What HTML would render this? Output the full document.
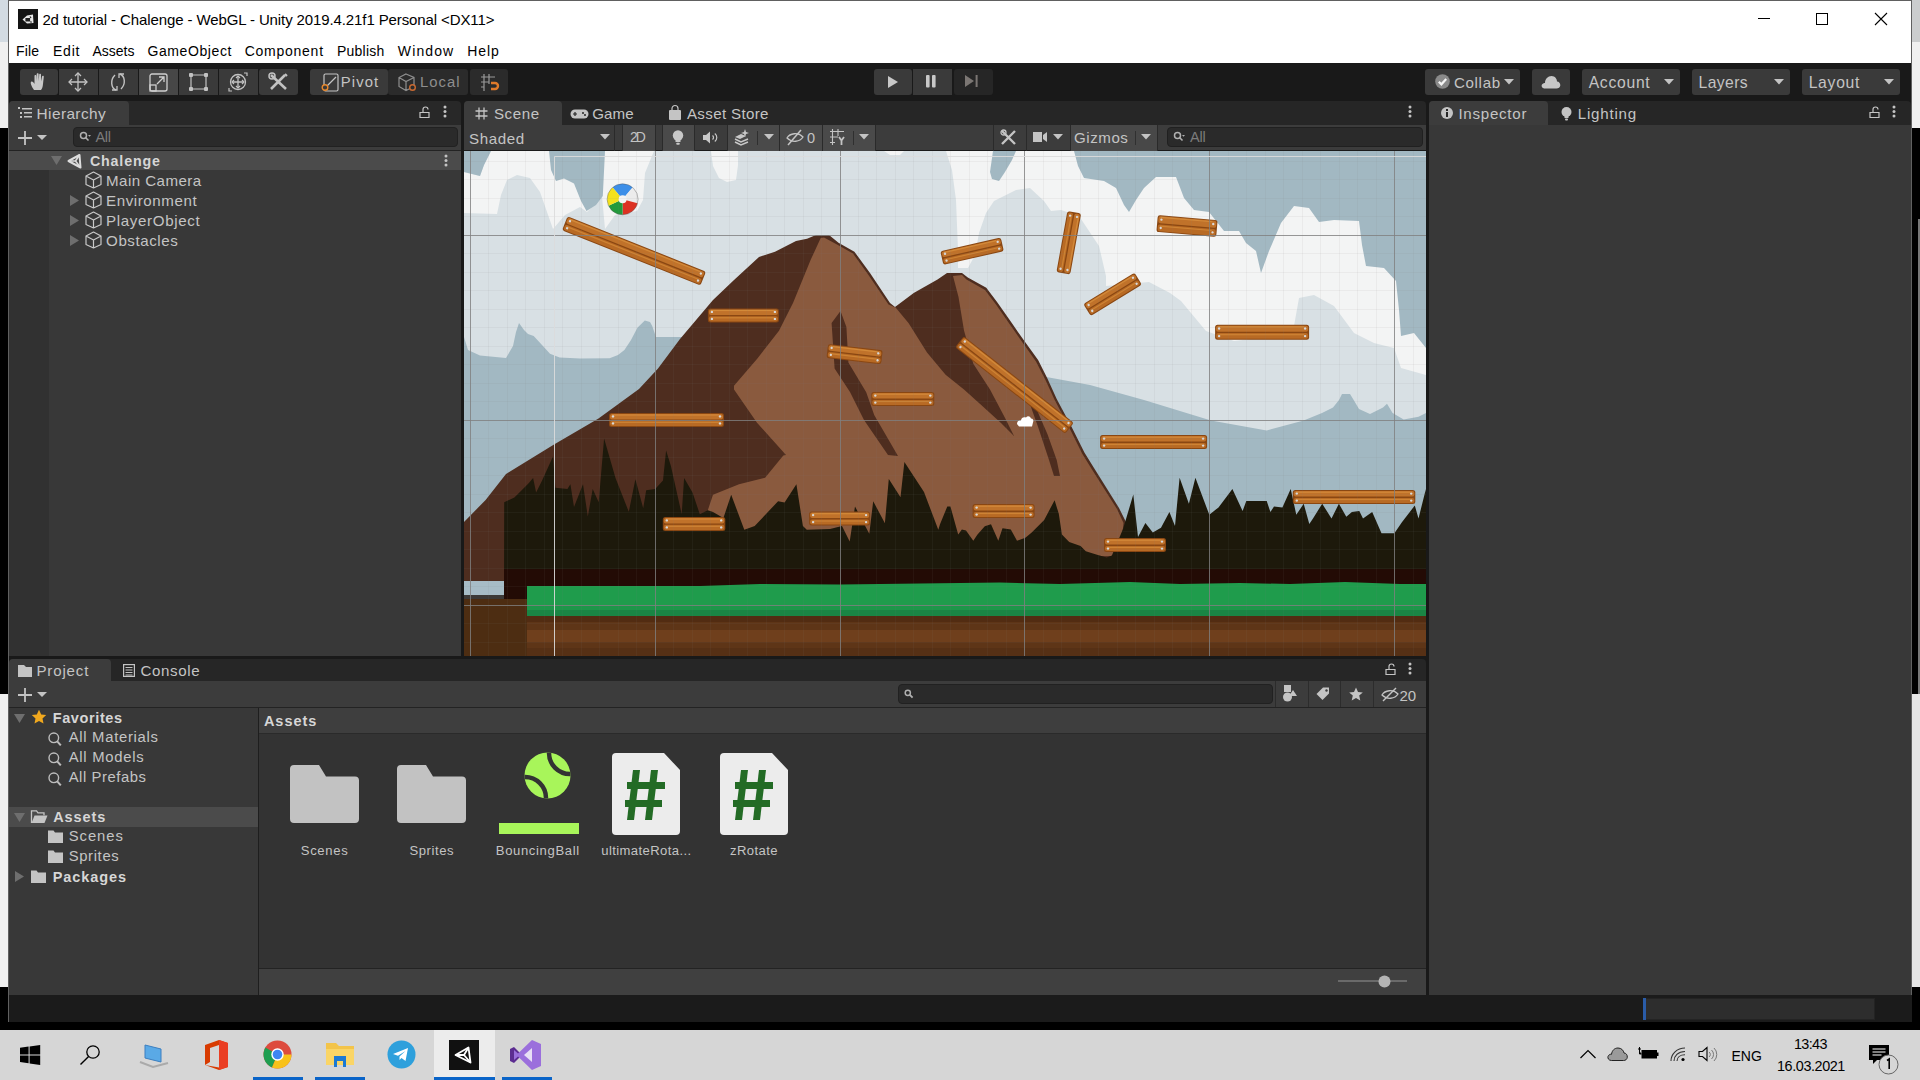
<!DOCTYPE html>
<html><head><meta charset="utf-8">
<style>
*{margin:0;padding:0;box-sizing:border-box}
html,body{width:1920px;height:1080px;overflow:hidden;background:#000;font-family:"Liberation Sans",sans-serif}
.a{position:absolute}
.t{position:absolute;white-space:pre;line-height:1}
.btn{position:absolute;background:#3a3a3a;border-radius:3px}
svg{position:absolute;overflow:visible}
</style></head><body>
<div class="a" style="left:0px;top:0px;width:1920px;height:42px;background:#d3dbe2;"></div>
<div class="a" style="left:1911px;top:0px;width:9px;height:128px;background:#cbcdce;"></div>
<div class="a" style="left:0px;top:42px;width:1920px;height:86px;background:#f0f0f0;"></div>
<div class="a" style="left:0px;top:694px;width:9px;height:293px;background:#f0f0f0;"></div>
<div class="a" style="left:1911px;top:694px;width:9px;height:293px;background:#e6e6e6;"></div>
<div class="a" style="left:1918px;top:219px;width:2px;height:475px;background:#777;"></div>
<div class="a" style="left:0px;top:1030px;width:1920px;height:50px;background:#d6d6d6;"></div>
<div class="a" style="left:8px;top:0px;width:1904px;height:1022px;background:#191919;border:1px solid #606060;border-bottom:none"></div>
<div class="a" style="left:9px;top:1px;width:1902px;height:62px;background:#fff;"></div>
<div class="a" style="left:18px;top:9px;width:20px;height:20px;background:#141414;"></div>
<svg style="left:18px;top:9px" width="20" height="20" viewBox="0 0 20 20"><path d="M4.5 10.5L9 6.5L15 5.5L15.5 14L9 14.5Z" fill="#e8e8e8"/><path d="M8 9.5h3.5v2.5H8z M12 7.5l1 1.5 M12.5 12.5l1 1" stroke="#222" stroke-width="1.2" fill="#222"/></svg>
<div class="t" style="left:42.40px;top:12.30px;font-size:15.00px;letter-spacing:-0.109px;color:#000;">2d tutorial - Chalenge - WebGL - Unity 2019.4.21f1 Personal &lt;DX11&gt;</div>
<div class="a" style="left:1758px;top:18px;width:12px;height:1px;background:#000;"></div>
<div class="a" style="left:1816px;top:13px;width:12px;height:12px;background:transparent;border:1px solid #000"></div>
<svg style="left:1875px;top:13px" width="12" height="12"><path d="M0 0L12 12M12 0L0 12" stroke="#000" stroke-width="1.1"/></svg>
<div class="t" style="left:15.94px;top:43.65px;font-size:14.00px;letter-spacing:0.140px;color:#000;">File</div>
<div class="t" style="left:52.94px;top:43.65px;font-size:14.00px;letter-spacing:0.785px;color:#000;">Edit</div>
<div class="t" style="left:92.44px;top:43.65px;font-size:14.00px;letter-spacing:-0.007px;color:#000;">Assets</div>
<div class="t" style="left:147.44px;top:43.65px;font-size:14.00px;letter-spacing:0.599px;color:#000;">GameObject</div>
<div class="t" style="left:244.74px;top:43.65px;font-size:14.00px;letter-spacing:0.738px;color:#000;">Component</div>
<div class="t" style="left:337.04px;top:43.65px;font-size:14.00px;letter-spacing:0.227px;color:#000;">Publish</div>
<div class="t" style="left:397.84px;top:43.65px;font-size:14.00px;letter-spacing:1.117px;color:#000;">Window</div>
<div class="t" style="left:467.14px;top:43.65px;font-size:14.00px;letter-spacing:0.929px;color:#000;">Help</div>
<div class="a" style="left:9px;top:63px;width:1902px;height:38px;background:#191919;"></div>
<div class="a" style="left:20px;top:69px;width:38px;height:26px;background:#3a3a3a;border-radius:3px"></div>
<div class="a" style="left:59px;top:69px;width:39px;height:26px;background:#3a3a3a;border-radius:0"></div>
<div class="a" style="left:99px;top:69px;width:39px;height:26px;background:#3a3a3a;border-radius:0"></div>
<div class="a" style="left:139px;top:69px;width:39px;height:26px;background:#474747;border-radius:0"></div>
<div class="a" style="left:179px;top:69px;width:39px;height:26px;background:#3a3a3a;border-radius:0"></div>
<div class="a" style="left:219px;top:69px;width:39px;height:26px;background:#3a3a3a;border-radius:0"></div>
<div class="a" style="left:259px;top:69px;width:39px;height:26px;background:#3a3a3a;border-radius:3px"></div>
<div class="a" style="left:310px;top:69px;width:78px;height:26px;background:#3a3a3a;border-radius:3px"></div>
<div class="a" style="left:388px;top:69px;width:80px;height:26px;background:#2b2b2b;border-radius:3px"></div>
<div class="a" style="left:470px;top:69px;width:38px;height:26px;background:#2b2b2b;border-radius:3px"></div>
<div class="a" style="left:874px;top:69px;width:38px;height:26px;background:#3a3a3a;border-radius:3px"></div>
<div class="a" style="left:913px;top:69px;width:39px;height:26px;background:#3a3a3a;border-radius:0"></div>
<div class="a" style="left:954px;top:69px;width:39px;height:26px;background:#262626;border-radius:3px"></div>
<div class="a" style="left:1425px;top:69px;width:95px;height:26px;background:#3a3a3a;border-radius:3px"></div>
<div class="a" style="left:1532px;top:69px;width:38px;height:26px;background:#3a3a3a;border-radius:3px"></div>
<div class="a" style="left:1582px;top:69px;width:98px;height:26px;background:#3a3a3a;border-radius:3px"></div>
<div class="a" style="left:1692px;top:69px;width:98px;height:26px;background:#3a3a3a;border-radius:3px"></div>
<div class="a" style="left:1802px;top:69px;width:98px;height:26px;background:#3a3a3a;border-radius:3px"></div>
<svg style="left:28px;top:71px" width="22" height="22" viewBox="0 0 22 22"><path d="M6 19 C4 16 2 12 3 11 C4 10 5.5 11 6.5 13 L6.5 5 C6.5 3.6 8.3 3.6 8.3 5 L8.5 10 L8.7 3.2 C8.7 1.8 10.6 1.8 10.6 3.2 L10.7 10 L11.2 3.8 C11.2 2.4 13 2.4 13 3.8 L13 10.5 L14 5.5 C14.2 4.2 16 4.4 15.8 5.8 L15 13 C14.8 16 14 18 13 19 Z" fill="#c8c8c8"/></svg>
<svg style="left:68px;top:72px" width="20" height="20" viewBox="0 0 20 20"><path d="M10 1v18M1 10h18" stroke="#c2c2c2" stroke-width="1.3"/><path d="M7 4l3-3 3 3M7 16l3 3 3-3M4 7l-3 3 3 3M16 7l3 3-3 3" fill="none" stroke="#c2c2c2" stroke-width="1.3"/></svg>
<svg style="left:108px;top:72px" width="20" height="20" viewBox="0 0 20 20"><path d="M8 18 C3 16 2 8 7 3 M12 2 C17 4 18 12 13 17" fill="none" stroke="#c2c2c2" stroke-width="1.4"/><path d="M4 18h5v-4 M16 2h-5v4" fill="none" stroke="#c2c2c2" stroke-width="1.3"/></svg>
<svg style="left:149px;top:73px" width="19" height="19" viewBox="0 0 19 19"><rect x="1" y="1" width="17" height="17" rx="2" fill="none" stroke="#d0d0d0" stroke-width="1.3"/><rect x="1" y="12" width="6" height="6" fill="none" stroke="#d0d0d0" stroke-width="1.3"/><path d="M8 11L15 4M10 4h5v5" fill="none" stroke="#d0d0d0" stroke-width="1.3"/></svg>
<svg style="left:189px;top:73px" width="19" height="18" viewBox="0 0 19 18"><path d="M2 3v12M17 3v12M3 2h13M3 16h13" stroke="#c2c2c2" stroke-width="1.2"/><g fill="#c2c2c2"><rect x="0" y="0" width="4" height="4" rx="1"/><rect x="15" y="0" width="4" height="4" rx="1"/><rect x="0" y="14" width="4" height="4" rx="1"/><rect x="15" y="14" width="4" height="4" rx="1"/></g></svg>
<svg style="left:228px;top:72px" width="20" height="20" viewBox="0 0 20 20"><circle cx="10" cy="10" r="7.5" fill="none" stroke="#c2c2c2" stroke-width="1.3"/><path d="M10 4v12M4 10h12" stroke="#c2c2c2" stroke-width="1.3"/><path d="M8 6l2-2 2 2M8 14l2 2 2-2M6 8l-2 2 2 2M14 8l2 2-2 2" fill="none" stroke="#c2c2c2" stroke-width="1.2"/><path d="M16 1h3v3M1 16v3h3" fill="none" stroke="#c2c2c2" stroke-width="1.2"/></svg>
<svg style="left:268px;top:72px" width="20" height="20" viewBox="0 0 20 20"><path d="M3 3l15 14M17 3L3 17" stroke="#c2c2c2" stroke-width="2.6"/><circle cx="4" cy="4" r="3" fill="none" stroke="#c2c2c2" stroke-width="1.5"/><path d="M17 2l2 2" stroke="#c2c2c2" stroke-width="2"/></svg>
<svg style="left:321px;top:73px" width="18" height="19" viewBox="0 0 18 19"><rect x="3" y="1" width="14" height="17" rx="1.5" fill="none" stroke="#c4c4c4" stroke-width="1.2"/><path d="M5 14L15 4" stroke="#c4c4c4" stroke-width="1.2"/><circle cx="4" cy="14.5" r="2.8" fill="#383838" stroke="#e8892e" stroke-width="1.4"/></svg>
<div class="t" style="left:340.71px;top:74.95px;font-size:14.83px;letter-spacing:1.144px;color:#c4c4c4;">Pivot</div>
<svg style="left:398px;top:73px" width="19" height="19" viewBox="0 0 19 19"><path d="M8 1L16 4.5v9L8 17.5L1 13.5v-9z M1 4.5l7 4 8-4 M8 8.5v9" fill="none" stroke="#8e8e8e" stroke-width="1.2"/><circle cx="14.5" cy="14.5" r="2.8" fill="#2b2b2b" stroke="#c96a32" stroke-width="1.4"/></svg>
<div class="t" style="left:420.01px;top:74.95px;font-size:14.83px;letter-spacing:0.999px;color:#8e8e8e;">Local</div>
<svg style="left:480px;top:73px" width="20" height="19" viewBox="0 0 20 19"><path d="M4 1v17M9 1v10M1 4h14M1 9h8M1 14h3" stroke="#9a9a9a" stroke-width="1.2"/><path d="M11 10h4a3 3 0 0 1 0 6h-4" fill="none" stroke="#e07a2a" stroke-width="2.4"/></svg>
<svg style="left:887px;top:75px" width="12" height="14"><path d="M1 1v12l10-6z" fill="#c8c8c8"/></svg>
<svg style="left:925px;top:75px" width="12" height="14"><rect x="1" y="0" width="3.6" height="12.6" rx="1" fill="#c8c8c8"/><rect x="7" y="0" width="3.6" height="12.6" rx="1" fill="#c8c8c8"/></svg>
<svg style="left:965px;top:75px" width="14" height="14"><path d="M0 0v12l9-6z M10.6 0h2v12h-2z" fill="#7b7673"/></svg>
<svg style="left:1435px;top:74px" width="15" height="15"><circle cx="7.5" cy="7.5" r="7.3" fill="#8a8a8a"/><path d="M3.8 7.7l2.6 2.6 4.8-5.2" fill="none" stroke="#f4f4f4" stroke-width="2.2"/></svg>
<div class="t" style="left:1453.90px;top:75.00px;font-size:15.12px;letter-spacing:0.681px;color:#c4c4c4;">Collab</div>
<svg style="left:1504px;top:79px" width="10" height="6"><path d="M0 0h10l-5 5.6z" fill="#c4c4c4"/></svg>
<svg style="left:1541px;top:75px" width="20" height="14" viewBox="0 0 20 14"><path d="M4 13.5C1 13.5 0 11 1 9.5C2 8 3.5 8 4 8C4 4 7 1 10.5 1C14 1 16 4 16 6.5C18 6.5 19.5 8.5 19.3 10.5C19 12.5 17.5 13.5 15.5 13.5Z" fill="#c8c8c8"/></svg>
<div class="t" style="left:1588.67px;top:74.71px;font-size:15.70px;letter-spacing:0.730px;color:#c4c4c4;">Account</div>
<svg style="left:1664px;top:79px" width="10" height="6"><path d="M0 0h10l-5 5.6z" fill="#c4c4c4"/></svg>
<div class="t" style="left:1698.57px;top:74.71px;font-size:15.70px;letter-spacing:0.396px;color:#c4c4c4;">Layers</div>
<svg style="left:1774px;top:79px" width="10" height="6"><path d="M0 0h10l-5 5.6z" fill="#c4c4c4"/></svg>
<div class="t" style="left:1808.67px;top:74.71px;font-size:15.70px;letter-spacing:0.733px;color:#c4c4c4;">Layout</div>
<svg style="left:1884px;top:79px" width="10" height="6"><path d="M0 0h10l-5 5.6z" fill="#c4c4c4"/></svg>
<div class="a" style="left:9px;top:101px;width:452px;height:24px;background:#282828;border-radius:4px 4px 0 0"></div>
<div class="a" style="left:9px;top:101px;width:120px;height:24px;background:#3c3c3c;border-radius:4px 4px 0 0"></div>
<div class="a" style="left:9px;top:125px;width:452px;height:25px;background:#3c3c3c;"></div>
<div class="a" style="left:9px;top:150px;width:452px;height:506px;background:#383838;"></div>
<div class="a" style="left:9px;top:150px;width:452px;height:1px;background:#232323;"></div>
<div class="a" style="left:73px;top:127px;width:385px;height:20px;background:#2a2a2a;border:1px solid #212121;border-radius:4px"></div>
<div class="a" style="left:9px;top:151px;width:452px;height:19px;background:#4b4b4b;"></div>
<div class="a" style="left:9px;top:170px;width:40px;height:486px;background:#313131;"></div>
<div class="a" style="left:464px;top:101px;width:962px;height:24px;background:#262626;border-radius:4px 4px 0 0"></div>
<div class="a" style="left:464px;top:101px;width:98px;height:24px;background:#3c3c3c;border-radius:4px 4px 0 0"></div>
<div class="a" style="left:464px;top:125px;width:962px;height:26px;background:#3c3c3c;"></div>
<div class="a" style="left:464px;top:150px;width:962px;height:1px;background:#1a1a1a;"></div>
<div class="a" style="left:1429px;top:101px;width:482px;height:24px;background:#262626;border-radius:4px 4px 0 0"></div>
<div class="a" style="left:1429px;top:101px;width:119px;height:24px;background:#3c3c3c;border-radius:4px 4px 0 0"></div>
<div class="a" style="left:1429px;top:125px;width:482px;height:870px;background:#383838;"></div>
<div class="a" style="left:9px;top:659px;width:1417px;height:22px;background:#262626;border-radius:4px 4px 0 0"></div>
<div class="a" style="left:9px;top:659px;width:102px;height:22px;background:#3c3c3c;border-radius:4px 4px 0 0"></div>
<div class="a" style="left:9px;top:681px;width:1417px;height:26px;background:#3c3c3c;"></div>
<div class="a" style="left:9px;top:707px;width:1417px;height:1px;background:#232323;"></div>
<div class="a" style="left:9px;top:708px;width:249px;height:287px;background:#383838;"></div>
<div class="a" style="left:258px;top:708px;width:1px;height:287px;background:#1e1e1e;"></div>
<div class="a" style="left:259px;top:708px;width:1167px;height:25px;background:#3e3e3e;"></div>
<div class="a" style="left:259px;top:733px;width:1167px;height:1px;background:#2a2a2a;"></div>
<div class="a" style="left:259px;top:734px;width:1167px;height:234px;background:#333333;"></div>
<div class="a" style="left:259px;top:968px;width:1167px;height:1px;background:#232323;"></div>
<div class="a" style="left:259px;top:969px;width:1167px;height:26px;background:#404040;"></div>
<div class="a" style="left:898px;top:684px;width:375px;height:20px;background:#2a2a2a;border:1px solid #212121;border-radius:4px"></div>
<div class="a" style="left:9px;top:995px;width:1903px;height:27px;background:#1b1b1b;"></div>
<div class="a" style="left:1643px;top:998px;width:232px;height:22px;background:#2d2d2d;border:1px solid #232323"></div>
<div class="a" style="left:1643px;top:998px;width:3px;height:22px;background:#2a5ca8;"></div>
<svg style="left:18px;top:107px" width="14" height="12" viewBox="0 0 14 12"><g fill="#c4c4c4"><rect x="0" y="0" width="2" height="2"/><rect x="4" y="1" width="10" height="1.5"/><rect x="2" y="5" width="2" height="2"/><rect x="6" y="5" width="8" height="1.5"/><rect x="2" y="9" width="2" height="2"/><rect x="6" y="9" width="8" height="1.5"/></g></svg>
<div class="t" style="left:36.58px;top:105.96px;font-size:15.41px;letter-spacing:0.394px;color:#c4c4c4;">Hierarchy</div>
<svg style="left:419px;top:106px" width="11" height="12" viewBox="0 0 11 12"><path d="M1 6.5h9v5H1z M4 6.5V3.5a2.5 2.5 0 0 1 5 0" fill="none" stroke="#c4c4c4" stroke-width="1.2"/></svg>
<svg style="left:443px;top:105px" width="4" height="14"><circle cx="2" cy="2" r="1.5" fill="#c4c4c4"/><circle cx="2" cy="6.5" r="1.5" fill="#c4c4c4"/><circle cx="2" cy="11" r="1.5" fill="#c4c4c4"/></svg>
<svg style="left:17px;top:130px" width="32" height="16"><path d="M8 1v14M1 8h14" stroke="#c4c4c4" stroke-width="1.8"/><path d="M20 5h10l-5 5z" fill="#c4c4c4"/></svg>
<svg style="left:79px;top:131px" width="14" height="12"><circle cx="4.5" cy="4.5" r="3" fill="none" stroke="#b0b0b0" stroke-width="1.5"/><path d="M6.5 6.5l3 3" stroke="#b0b0b0" stroke-width="1.6"/><path d="M9 4h3l-1.5 1.8z" fill="#b0b0b0"/></svg>
<div class="t" style="left:95.42px;top:129.70px;font-size:14.53px;letter-spacing:-0.318px;color:#7c7c7c;">All</div>
<svg style="left:51px;top:156px" width="11" height="9"><path d="M0 0h11l-5.5 9z" fill="#6e6e6e"/></svg>
<svg style="left:67px;top:153px" width="16" height="16" viewBox="0 0 16 16"><path d="M1.5 8L12.5 2L13.5 14.5Z" fill="none" stroke="#ddd" stroke-width="2" stroke-linejoin="round"/><path d="M1.5 8h7M8.5 8l4-6M8.5 8l5 6.5" stroke="#ddd" stroke-width="1.6"/></svg>
<div class="t" style="left:89.93px;top:153.94px;font-size:14.24px;letter-spacing:0.840px;color:#d6d6d6;font-weight:bold;">Chalenge</div>
<svg style="left:444px;top:154px" width="4" height="14"><circle cx="2" cy="2" r="1.5" fill="#c4c4c4"/><circle cx="2" cy="6.5" r="1.5" fill="#c4c4c4"/><circle cx="2" cy="11" r="1.5" fill="#c4c4c4"/></svg>
<svg style="left:85px;top:171px" width="17" height="18" viewBox="0 0 17 18"><path d="M8.5 1L16 5v8.5L8.5 17L1 13.5V5z M1 5l7.5 4L16 5 M8.5 9v8" fill="none" stroke="#c8c8c8" stroke-width="1.2" stroke-linejoin="round"/></svg>
<div class="t" style="left:106.10px;top:173.20px;font-size:15.12px;letter-spacing:0.433px;color:#c4c4c4;">Main Camera</div>
<svg style="left:85px;top:191px" width="17" height="18" viewBox="0 0 17 18"><path d="M8.5 1L16 5v8.5L8.5 17L1 13.5V5z M1 5l7.5 4L16 5 M8.5 9v8" fill="none" stroke="#c8c8c8" stroke-width="1.2" stroke-linejoin="round"/></svg>
<svg style="left:70px;top:195px" width="9" height="11"><path d="M0 0v11l9-5.5z" fill="#6e6e6e"/></svg>
<div class="t" style="left:106.10px;top:193.20px;font-size:15.12px;letter-spacing:0.570px;color:#c4c4c4;">Environment</div>
<svg style="left:85px;top:211px" width="17" height="18" viewBox="0 0 17 18"><path d="M8.5 1L16 5v8.5L8.5 17L1 13.5V5z M1 5l7.5 4L16 5 M8.5 9v8" fill="none" stroke="#c8c8c8" stroke-width="1.2" stroke-linejoin="round"/></svg>
<svg style="left:70px;top:215px" width="9" height="11"><path d="M0 0v11l9-5.5z" fill="#6e6e6e"/></svg>
<div class="t" style="left:106.10px;top:213.20px;font-size:15.12px;letter-spacing:0.638px;color:#c4c4c4;">PlayerObject</div>
<svg style="left:85px;top:231px" width="17" height="18" viewBox="0 0 17 18"><path d="M8.5 1L16 5v8.5L8.5 17L1 13.5V5z M1 5l7.5 4L16 5 M8.5 9v8" fill="none" stroke="#c8c8c8" stroke-width="1.2" stroke-linejoin="round"/></svg>
<svg style="left:70px;top:235px" width="9" height="11"><path d="M0 0v11l9-5.5z" fill="#6e6e6e"/></svg>
<div class="t" style="left:106.10px;top:233.20px;font-size:15.12px;letter-spacing:0.556px;color:#c4c4c4;">Obstacles</div>
<svg style="left:475px;top:107px" width="13" height="13" viewBox="0 0 13 13"><path d="M4 0.5v12M9 0.5v12M0.5 4h12M0.5 9h12" stroke="#c4c4c4" stroke-width="1.3"/></svg>
<div class="t" style="left:493.90px;top:106.40px;font-size:15.12px;letter-spacing:0.624px;color:#c4c4c4;">Scene</div>
<svg style="left:570px;top:109px" width="19" height="10" viewBox="0 0 19 10"><rect x="0.5" y="0.5" width="18" height="9" rx="4.5" fill="#c4c4c4"/><path d="M3 5h4M5 3v4" stroke="#262626" stroke-width="1.2"/><circle cx="13" cy="4" r="1" fill="#262626"/><circle cx="15" cy="6" r="1" fill="#262626"/></svg>
<div class="t" style="left:592.20px;top:106.40px;font-size:15.12px;letter-spacing:0.097px;color:#c4c4c4;">Game</div>
<svg style="left:669px;top:106px" width="12" height="14" viewBox="0 0 12 14"><path d="M3 4V2.5a3 3 0 0 1 6 0V4" fill="none" stroke="#c4c4c4" stroke-width="1.2"/><rect x="0" y="4" width="12" height="10" rx="1" fill="#c4c4c4"/></svg>
<div class="t" style="left:686.90px;top:106.40px;font-size:15.12px;letter-spacing:0.352px;color:#c4c4c4;">Asset Store</div>
<svg style="left:1408px;top:105px" width="4" height="14"><circle cx="2" cy="2" r="1.5" fill="#c4c4c4"/><circle cx="2" cy="6.5" r="1.5" fill="#c4c4c4"/><circle cx="2" cy="11" r="1.5" fill="#c4c4c4"/></svg>
<div class="a" style="left:614px;top:125px;width:1px;height:26px;background:#2a2a2a;"></div>
<div class="a" style="left:622px;top:125px;width:1px;height:26px;background:#2a2a2a;"></div>
<div class="a" style="left:623px;top:125px;width:32px;height:26px;background:#484848;"></div>
<div class="a" style="left:655px;top:125px;width:1px;height:26px;background:#2a2a2a;"></div>
<div class="a" style="left:662px;top:125px;width:1px;height:26px;background:#2a2a2a;"></div>
<div class="a" style="left:663px;top:125px;width:31px;height:26px;background:#4a4a4a;"></div>
<div class="a" style="left:694px;top:125px;width:1px;height:26px;background:#2a2a2a;"></div>
<div class="a" style="left:727px;top:125px;width:1px;height:26px;background:#2a2a2a;"></div>
<div class="a" style="left:728px;top:125px;width:51px;height:26px;background:#4a4a4a;"></div>
<div class="a" style="left:779px;top:125px;width:1px;height:26px;background:#2a2a2a;"></div>
<div class="a" style="left:780px;top:125px;width:42px;height:26px;background:#4a4a4a;"></div>
<div class="a" style="left:822px;top:125px;width:1px;height:26px;background:#2a2a2a;"></div>
<div class="a" style="left:823px;top:125px;width:52px;height:26px;background:#4a4a4a;"></div>
<div class="a" style="left:875px;top:125px;width:1px;height:26px;background:#2a2a2a;"></div>
<div class="a" style="left:993px;top:125px;width:1px;height:26px;background:#2a2a2a;"></div>
<div class="a" style="left:1026px;top:125px;width:1px;height:26px;background:#2a2a2a;"></div>
<div class="a" style="left:1070px;top:125px;width:1px;height:26px;background:#2a2a2a;"></div>
<div class="a" style="left:1071px;top:125px;width:86px;height:26px;background:#484848;"></div>
<div class="a" style="left:1157px;top:125px;width:1px;height:26px;background:#2a2a2a;"></div>
<div class="a" style="left:1167px;top:127px;width:256px;height:20px;background:#2a2a2a;border:1px solid #202020;border-radius:4px"></div>
<div class="t" style="left:469.10px;top:130.50px;font-size:15.12px;letter-spacing:0.588px;color:#c4c4c4;">Shaded</div>
<svg style="left:600px;top:134px" width="10" height="6"><path d="M0 0h10l-5 5.6z" fill="#c4c4c4"/></svg>
<div class="t" style="left:629.94px;top:130.69px;font-size:13.95px;letter-spacing:-2.062px;color:#c4c4c4;">2D</div>
<svg style="left:672px;top:130px" width="12" height="16" viewBox="0 0 12 16"><circle cx="6" cy="5.5" r="5.2" fill="#c8c8c8"/><rect x="3.5" y="9" width="5" height="3" fill="#c8c8c8"/><rect x="4.2" y="12.8" width="3.6" height="2" rx="1" fill="#c8c8c8"/></svg>
<svg style="left:703px;top:131px" width="15" height="13" viewBox="0 0 15 13"><path d="M0 4h3l4-3.5v12L3 9H0z" fill="#c8c8c8"/><path d="M9.5 4.5a2.5 2.5 0 0 1 0 4 M11.8 2.5a5 5 0 0 1 0 8" fill="none" stroke="#c8c8c8" stroke-width="1.2"/></svg>
<svg style="left:734px;top:129px" width="16" height="16" viewBox="0 0 16 16"><path d="M1 10l6 3 7-3M1 13l6 3 7-3" fill="none" stroke="#c8c8c8" stroke-width="1.5"/><path d="M1 8l6-3 5 2-6 3z" fill="#c8c8c8"/><path d="M11 0l1 3 3 1-3 1-1 3-1-3-3-1 3-1z" fill="#c8c8c8"/></svg>
<div class="a" style="left:757px;top:131px;width:1px;height:14px;background:#2f2f2f;"></div>
<svg style="left:764px;top:134px" width="10" height="6"><path d="M0 0h10l-5 5.6z" fill="#c4c4c4"/></svg>
<svg style="left:786px;top:129px" width="18" height="17" viewBox="0 0 18 17"><path d="M1 9C4 4 12 3 17 8C14 13 6 14 1 9Z" fill="none" stroke="#c4c4c4" stroke-width="1.3"/><path d="M2 16L15 1" stroke="#c4c4c4" stroke-width="1.5"/></svg>
<div class="t" style="left:806.92px;top:130.70px;font-size:14.53px;letter-spacing:0.000px;color:#c4c4c4;">0</div>
<svg style="left:829px;top:128px" width="18" height="18" viewBox="0 0 18 18"><path d="M3.5 1v16M9 1v7M1 3.5h14M1 9h8M1 14.5h5" stroke="#c4c4c4" stroke-width="1.1"/><path d="M10 9l2.5 3.5L15 9M12.5 12.5V17" fill="none" stroke="#c4c4c4" stroke-width="1.8"/></svg>
<div class="a" style="left:853px;top:131px;width:1px;height:14px;background:#2f2f2f;"></div>
<svg style="left:859px;top:134px" width="10" height="6"><path d="M0 0h10l-5 5.6z" fill="#c4c4c4"/></svg>
<svg style="left:1000px;top:129px" width="17" height="17" viewBox="0 0 17 17"><path d="M2 2l13 13M15 2L2 15" stroke="#c4c4c4" stroke-width="2.4"/><circle cx="3.5" cy="3.5" r="2.5" fill="none" stroke="#c4c4c4" stroke-width="1.3"/></svg>
<svg style="left:1033px;top:131px" width="35" height="12" viewBox="0 0 35 12"><rect x="0" y="1" width="9" height="10" fill="#c4c4c4"/><path d="M10 4l4-3v10l-4-3z" fill="#c4c4c4"/><path d="M20 3h10l-5 5.5z" fill="#c4c4c4"/></svg>
<div class="t" style="left:1074.10px;top:130.40px;font-size:15.12px;letter-spacing:0.525px;color:#c4c4c4;">Gizmos</div>
<div class="a" style="left:1135px;top:131px;width:1px;height:14px;background:#303030;"></div>
<svg style="left:1141px;top:134px" width="10" height="6"><path d="M0 0h10l-5 5.6z" fill="#c4c4c4"/></svg>
<svg style="left:1173px;top:131px" width="14" height="12"><circle cx="4.5" cy="4.5" r="3" fill="none" stroke="#b0b0b0" stroke-width="1.5"/><path d="M6.5 6.5l3 3" stroke="#b0b0b0" stroke-width="1.6"/><path d="M9 4h3l-1.5 1.8z" fill="#b0b0b0"/></svg>
<div class="t" style="left:1189.92px;top:130.20px;font-size:14.53px;letter-spacing:-0.118px;color:#7c7c7c;">All</div>
<svg style="left:1441px;top:107px" width="12" height="12"><circle cx="6" cy="6" r="6" fill="#c4c4c4"/><rect x="5" y="5" width="2" height="5" fill="#282828"/><rect x="5" y="2" width="2" height="2" fill="#282828"/></svg>
<div class="t" style="left:1458.40px;top:106.40px;font-size:15.12px;letter-spacing:0.735px;color:#c4c4c4;">Inspector</div>
<svg style="left:1561px;top:107px" width="11" height="14" viewBox="0 0 11 14"><circle cx="5.5" cy="5" r="5" fill="#c4c4c4"/><rect x="3.5" y="9" width="4" height="2" fill="#c4c4c4"/><rect x="4" y="11.5" width="3" height="2" rx="1" fill="#c4c4c4"/></svg>
<div class="t" style="left:1577.70px;top:106.40px;font-size:15.12px;letter-spacing:0.801px;color:#c4c4c4;">Lighting</div>
<svg style="left:1869px;top:106px" width="11" height="12" viewBox="0 0 11 12"><path d="M1 6.5h9v5H1z M4 6.5V3.5a2.5 2.5 0 0 1 5 0" fill="none" stroke="#c4c4c4" stroke-width="1.2"/></svg>
<svg style="left:1892px;top:105px" width="4" height="14"><circle cx="2" cy="2" r="1.5" fill="#c4c4c4"/><circle cx="2" cy="6.5" r="1.5" fill="#c4c4c4"/><circle cx="2" cy="11" r="1.5" fill="#c4c4c4"/></svg>
<svg style="left:18px;top:665px" width="14" height="12" viewBox="0 0 14 12"><path d="M0 0h6l2 2h6v10H0z" fill="#c4c4c4"/></svg>
<div class="t" style="left:36.40px;top:663.20px;font-size:15.12px;letter-spacing:0.835px;color:#c4c4c4;">Project</div>
<svg style="left:123px;top:664px" width="12" height="13" viewBox="0 0 12 13"><rect x="0.6" y="0.6" width="10.8" height="11.8" fill="none" stroke="#c4c4c4" stroke-width="1.2"/><path d="M2.5 3.5h7M2.5 6h7M2.5 8.5h7M2.5 11h7" stroke="#c4c4c4" stroke-width="1.1"/></svg>
<div class="t" style="left:140.40px;top:663.20px;font-size:15.12px;letter-spacing:0.633px;color:#c4c4c4;">Console</div>
<svg style="left:1385px;top:663px" width="11" height="12" viewBox="0 0 11 12"><path d="M1 6.5h9v5H1z M4 6.5V3.5a2.5 2.5 0 0 1 5 0" fill="none" stroke="#c4c4c4" stroke-width="1.2"/></svg>
<svg style="left:1408px;top:662px" width="4" height="14"><circle cx="2" cy="2" r="1.5" fill="#c4c4c4"/><circle cx="2" cy="6.5" r="1.5" fill="#c4c4c4"/><circle cx="2" cy="11" r="1.5" fill="#c4c4c4"/></svg>
<svg style="left:17px;top:687px" width="32" height="16"><path d="M8 1v14M1 8h14" stroke="#c4c4c4" stroke-width="1.8"/><path d="M20 5h10l-5 5z" fill="#c4c4c4"/></svg>
<svg style="left:904px;top:689px" width="10" height="10"><circle cx="3.8" cy="3.8" r="2.6" fill="none" stroke="#b0b0b0" stroke-width="1.5"/><path d="M5.6 5.6l3 3" stroke="#b0b0b0" stroke-width="1.8"/></svg>
<div class="a" style="left:1275px;top:681px;width:1px;height:26px;background:#2c2c2c;"></div>
<div class="a" style="left:1308px;top:681px;width:1px;height:26px;background:#2c2c2c;"></div>
<div class="a" style="left:1340px;top:681px;width:1px;height:26px;background:#2c2c2c;"></div>
<div class="a" style="left:1373px;top:681px;width:1px;height:26px;background:#2c2c2c;"></div>
<svg style="left:1283px;top:685px" width="15" height="17" viewBox="0 0 15 17"><rect x="1" y="0" width="7" height="7" fill="#c4c4c4"/><circle cx="4.5" cy="12" r="4.5" fill="#c4c4c4"/><path d="M10 5l4 6h-8z" fill="#c4c4c4"/></svg>
<svg style="left:1316px;top:687px" width="14" height="14" viewBox="0 0 14 14"><path d="M7 0.5h6v6L6.5 13 0.5 7z" fill="#c4c4c4"/><circle cx="10.5" cy="3.5" r="1.2" fill="#3c3c3c"/></svg>
<svg style="left:1349px;top:687px" width="14" height="14" viewBox="0 0 14 14"><path d="M7 0.5l2 4.5 4.8 0.4-3.6 3.2 1.1 4.8L7 10.9l-4.3 2.5 1.1-4.8L0.2 5.4 5 5z" fill="#c4c4c4"/></svg>
<svg style="left:1381px;top:687px" width="18" height="15" viewBox="0 0 18 15"><path d="M1 8C4 3 12 2 17 7C14 12 6 13 1 8Z" fill="none" stroke="#c4c4c4" stroke-width="1.3"/><path d="M2 14L15 1" stroke="#c4c4c4" stroke-width="1.5"/></svg>
<div class="t" style="left:1399.40px;top:688.30px;font-size:15.00px;letter-spacing:0.000px;color:#c4c4c4;">20</div>
<svg style="left:14px;top:714px" width="11" height="9"><path d="M0 0h11l-5.5 9z" fill="#6e6e6e"/></svg>
<svg style="left:31px;top:709px" width="16" height="16" viewBox="0 0 16 16"><path d="M8 0.8l2.2 4.6 5 0.6-3.7 3.4 1 5L8 11.9l-4.5 2.5 1-5L0.8 6l5-0.6z" fill="#f0a81e"/></svg>
<div class="t" style="left:52.67px;top:710.70px;font-size:14.53px;letter-spacing:0.611px;color:#d6d6d6;font-weight:bold;">Favorites</div>
<svg style="left:48px;top:732px" width="14" height="15" viewBox="0 0 14 15"><circle cx="5.8" cy="5.8" r="4.8" fill="none" stroke="#bdbdbd" stroke-width="1.4"/><path d="M9.2 9.4l3.6 4" stroke="#bdbdbd" stroke-width="2"/></svg>
<div class="t" style="left:68.66px;top:730.45px;font-size:14.83px;letter-spacing:0.717px;color:#c4c4c4;">All Materials</div>
<svg style="left:48px;top:752px" width="14" height="15" viewBox="0 0 14 15"><circle cx="5.8" cy="5.8" r="4.8" fill="none" stroke="#bdbdbd" stroke-width="1.4"/><path d="M9.2 9.4l3.6 4" stroke="#bdbdbd" stroke-width="2"/></svg>
<div class="t" style="left:68.66px;top:750.45px;font-size:14.83px;letter-spacing:0.739px;color:#c4c4c4;">All Models</div>
<svg style="left:48px;top:772px" width="14" height="15" viewBox="0 0 14 15"><circle cx="5.8" cy="5.8" r="4.8" fill="none" stroke="#bdbdbd" stroke-width="1.4"/><path d="M9.2 9.4l3.6 4" stroke="#bdbdbd" stroke-width="2"/></svg>
<div class="t" style="left:68.66px;top:770.45px;font-size:14.83px;letter-spacing:0.565px;color:#c4c4c4;">All Prefabs</div>
<div class="a" style="left:9px;top:807px;width:249px;height:20px;background:#4b4b4b;"></div>
<svg style="left:14px;top:813px" width="11" height="9"><path d="M0 0h11l-5.5 9z" fill="#6e6e6e"/></svg>
<svg style="left:31px;top:810px" width="17" height="14" viewBox="0 0 17 14"><path d="M0.5 13V0.8h5l1.5 2h6v2.5" fill="none" stroke="#c4c4c4" stroke-width="1.3"/><path d="M0.5 13l3-7.5h13l-3 7.5z" fill="#c4c4c4"/></svg>
<div class="t" style="left:53.17px;top:809.70px;font-size:14.53px;letter-spacing:0.909px;color:#d6d6d6;font-weight:bold;">Assets</div>
<svg style="left:48px;top:830px" width="15" height="13" viewBox="0 0 15 13"><path d="M0 0.5h5.5l1.5 2h8v10.5H0z" fill="#c4c4c4"/></svg>
<div class="t" style="left:68.66px;top:829.45px;font-size:14.83px;letter-spacing:0.958px;color:#c4c4c4;">Scenes</div>
<svg style="left:48px;top:850px" width="15" height="13" viewBox="0 0 15 13"><path d="M0 0.5h5.5l1.5 2h8v10.5H0z" fill="#c4c4c4"/></svg>
<div class="t" style="left:68.66px;top:849.45px;font-size:14.83px;letter-spacing:0.649px;color:#c4c4c4;">Sprites</div>
<svg style="left:15px;top:871px" width="9" height="11"><path d="M0 0v11l9-5.5z" fill="#6e6e6e"/></svg>
<svg style="left:31px;top:870px" width="15" height="13" viewBox="0 0 15 13"><path d="M0 0.5h5.5l1.5 2h8v10.5H0z" fill="#c4c4c4"/></svg>
<div class="t" style="left:52.67px;top:869.70px;font-size:14.53px;letter-spacing:0.920px;color:#d6d6d6;font-weight:bold;">Packages</div>
<div class="t" style="left:263.92px;top:713.70px;font-size:14.53px;letter-spacing:0.969px;color:#d6d6d6;font-weight:bold;">Assets</div>
<svg style="left:289.5px;top:764.5px" width="69" height="58" viewBox="0 0 69 58"><path d="M0 4a4 4 0 0 1 4-4h25l7 11.5h29a4 4 0 0 1 4 4V54a4 4 0 0 1-4 4H4a4 4 0 0 1-4-4z" fill="#c2c2c2"/></svg>
<svg style="left:396.75px;top:764.5px" width="69" height="58" viewBox="0 0 69 58"><path d="M0 4a4 4 0 0 1 4-4h25l7 11.5h29a4 4 0 0 1 4 4V54a4 4 0 0 1-4 4H4a4 4 0 0 1-4-4z" fill="#c2c2c2"/></svg>
<div class="t" style="left:300.73px;top:843.93px;font-size:13.08px;letter-spacing:0.697px;color:#c4c4c4;">Scenes</div>
<div class="t" style="left:409.48px;top:843.93px;font-size:13.08px;letter-spacing:0.567px;color:#c4c4c4;">Sprites</div>
<svg style="left:524px;top:752px" width="48" height="48" viewBox="0 0 48 48"><defs><clipPath id="bc"><circle cx="23.5" cy="23.5" r="23"/></clipPath></defs><circle cx="23.5" cy="23.5" r="23" fill="#a8f55a"/><g clip-path="url(#bc)" fill="none" stroke="#333" stroke-width="4.5"><circle cx="46" cy="1" r="21"/><circle cx="1" cy="46" r="21"/></g></svg>
<div class="a" style="left:499px;top:822.6px;width:80px;height:11.5px;background:#a8f55a;"></div>
<div class="t" style="left:495.78px;top:843.73px;font-size:13.08px;letter-spacing:0.641px;color:#c4c4c4;">BouncingBall</div>
<svg style="left:612px;top:752.5px" width="68" height="82" viewBox="0 0 68 82"><path d="M4 0h48l16 17v61a4 4 0 0 1-4 4H4a4 4 0 0 1-4-4V4a4 4 0 0 1 4-4z" fill="#ececec"/><g fill="#236b25"><path d="M21 17h7l-6 50h-7z"/><path d="M39 17h7l-6 50h-7z"/><rect x="15" y="29" width="38" height="7"/><rect x="13" y="47" width="37" height="7"/></g></svg>
<svg style="left:720px;top:752.5px" width="68" height="82" viewBox="0 0 68 82"><path d="M4 0h48l16 17v61a4 4 0 0 1-4 4H4a4 4 0 0 1-4-4V4a4 4 0 0 1 4-4z" fill="#ececec"/><g fill="#236b25"><path d="M21 17h7l-6 50h-7z"/><path d="M39 17h7l-6 50h-7z"/><rect x="15" y="29" width="38" height="7"/><rect x="13" y="47" width="37" height="7"/></g></svg>
<div class="t" style="left:601.28px;top:843.73px;font-size:13.08px;letter-spacing:0.391px;color:#c4c4c4;">ultimateRota...</div>
<div class="t" style="left:730.08px;top:843.73px;font-size:13.08px;letter-spacing:0.389px;color:#c4c4c4;">zRotate</div>
<div class="a" style="left:1338px;top:980px;width:69px;height:2px;background:#6a6a6a;"></div>
<svg style="left:1378px;top:975px" width="13" height="13"><circle cx="6.5" cy="6.5" r="6" fill="#b4b4b4"/></svg>
<svg style="left:20px;top:1045px" width="21" height="20" viewBox="0 0 21 20"><path d="M0 2.8L8.6 1.6v7.8H0z M9.6 1.4L20.2 0v9.4H9.6z M0 10.4h8.6v7.8L0 17z M9.6 10.4h10.6V20L9.6 18.6z" fill="#000"/></svg>
<svg style="left:80px;top:1045px" width="20" height="20" viewBox="0 0 20 20"><circle cx="13" cy="7" r="6.2" fill="none" stroke="#000" stroke-width="1.3"/><path d="M8.6 11.4L0.5 19.5" stroke="#000" stroke-width="1.4"/></svg>
<svg style="left:140px;top:1043px" width="28" height="26" viewBox="0 0 28 26"><path d="M5 2l16 4v13L5 15z" fill="#5aa9e6"/><path d="M5 2l16 4v13L5 15z" fill="none" stroke="#3c7fc0" stroke-width="1"/><path d="M0 19l13 5 15-4" fill="none" stroke="#aaa" stroke-width="2"/></svg>
<svg style="left:203px;top:1040px" width="26" height="30" viewBox="0 0 26 30"><path d="M2 5L16 0l9 3v24l-9 3L2 25l14 2.5V5L7 8v14l-5 3z" fill="#d83b01"/><path d="M16 0l9 3v24l-9 3z" fill="#ea3e23"/></svg>
<svg style="left:263px;top:1040px" width="29" height="29" viewBox="0 0 29 29"><circle cx="14.5" cy="14.5" r="14" fill="#dd4b3e"/><path d="M14.5 14.5L2.4 7.5A14 14 0 0 0 9 27.4z" fill="#1e9e50"/><path d="M14.5 14.5L9 27.4A14 14 0 0 0 28.5 14.5z" fill="#f8c21a"/><circle cx="14.5" cy="14.5" r="6.2" fill="#fff"/><circle cx="14.5" cy="14.5" r="4.8" fill="#3f86f3"/></svg>
<div class="a" style="left:253px;top:1077px;width:50px;height:3px;background:#0a64c8;"></div>
<svg style="left:326px;top:1041px" width="28" height="27" viewBox="0 0 28 27"><path d="M0 2h10l3 3h15v19H0z" fill="#f3c44a"/><path d="M0 8h28v16H0z" fill="#fad566"/><path d="M8 15h12v11h-3v-6h-6v6H8z" fill="#1c7ad4"/></svg>
<div class="a" style="left:315px;top:1077px;width:50px;height:3px;background:#0a64c8;"></div>
<svg style="left:387px;top:1040px" width="29" height="29" viewBox="0 0 29 29"><circle cx="14.5" cy="14.5" r="14" fill="#2ea0dc"/><path d="M6 14l15-6-2.5 13-4-3-2 2v-3.5l6-5.5-7.5 4.8z" fill="#fff"/></svg>
<div class="a" style="left:434px;top:1030px;width:61px;height:50px;background:#ececec;"></div>
<div class="a" style="left:449px;top:1040px;width:30px;height:30px;background:#111;"></div>
<svg style="left:452px;top:1043px" width="24" height="24" viewBox="0 0 24 24"><path d="M3.5 12L16.5 4.5L18.5 19.5Z" fill="none" stroke="#fff" stroke-width="1.8" stroke-linejoin="round"/><path d="M3.5 12h8.5M12 12l4.5-7.5M12 12l6.5 7.5" stroke="#fff" stroke-width="1.8"/></svg>
<div class="a" style="left:434px;top:1077px;width:61px;height:3px;background:#0a64c8;"></div>
<svg style="left:510px;top:1040px" width="31" height="30" viewBox="0 0 31 30"><path d="M0 9l4-2 8 8-8 8-4-2z" fill="#5c2d91"/><path d="M22 0l9 4v22l-9 4L8 16.5 4 20V10l4 3.5z" fill="#9b6fdc"/><path d="M22 8v14l-8-7z" fill="#e8dff5"/></svg>
<div class="a" style="left:502px;top:1077px;width:50px;height:3px;background:#0a64c8;"></div>
<svg style="left:1580px;top:1049px" width="16" height="10" viewBox="0 0 16 10"><path d="M0.5 9L8 1.5 15.5 9" fill="none" stroke="#000" stroke-width="1.2"/></svg>
<svg style="left:1607px;top:1047px" width="21" height="14" viewBox="0 0 21 14"><path d="M4.5 13.5C1.5 13.5 0.5 11 1 9.5C1.8 7.5 3.5 7 4.5 7.3C5 3.5 7.5 1 11 1C14.5 1 16.5 3.5 17 6C19 6 20.5 8 20.3 10.2C20 12.5 18.5 13.5 16.5 13.5Z" fill="#9a9a9a" stroke="#222" stroke-width="1"/><path d="M1 10h19" stroke="#666" stroke-width="0"/></svg>
<svg style="left:1638px;top:1047px" width="21" height="12" viewBox="0 0 21 12"><rect x="3.5" y="3" width="15.5" height="8.5" fill="#000"/><rect x="19" y="5.5" width="1.5" height="3.5" fill="#000"/><path d="M0 2h3M1.5 0v4M1.5 4v3h2" stroke="#000" stroke-width="1"/></svg>
<svg style="left:1670px;top:1047px" width="17" height="15" viewBox="0 0 17 15"><path d="M1 14C1 7 7 1 15 1M4 14C4 9 8 4.5 15 4.5M7 14C7 10.5 10 7.8 15 7.8" fill="none" stroke="#333" stroke-width="1.1"/><circle cx="13" cy="12.5" r="1.6" fill="#000"/></svg>
<svg style="left:1698px;top:1046px" width="21" height="17" viewBox="0 0 21 17"><path d="M1 5.5h3.5L9 1.5v13l-4.5-4H1z" fill="none" stroke="#000" stroke-width="1.1"/><path d="M11 6a3 3 0 0 1 0 5M13.5 4a6 6 0 0 1 0 9M16 2a9 9 0 0 1 0 13" fill="none" stroke="#777" stroke-width="1"/></svg>
<div class="t" style="left:1731.44px;top:1048.75px;font-size:14.00px;letter-spacing:0.000px;color:#000;">ENG</div>
<div class="t" style="left:1793.92px;top:1036.62px;font-size:14.39px;letter-spacing:-0.626px;color:#000;">13:43</div>
<div class="t" style="left:1777.02px;top:1059.32px;font-size:14.39px;letter-spacing:-0.401px;color:#000;">16.03.2021</div>
<svg style="left:1868px;top:1044px" width="25" height="26" viewBox="0 0 25 26"><path d="M1 1h20v15H9l-4 4v-4H1z" fill="#000"/><path d="M4.5 5h13M4.5 8h13M4.5 11h9" stroke="#fff" stroke-width="1.1"/><circle cx="20.5" cy="20.5" r="9.5" fill="#d6d6d6" stroke="#666" stroke-width="1"/><path d="M19 16.5l2.2-1.5v10" stroke="#000" stroke-width="1.6" fill="none"/></svg>
<svg style="left:464px;top:151px" width="962" height="505" viewBox="464 151 962 505"><rect x="464" y="151" width="962" height="505" fill="#d8e0e4"/><polygon fill="#a2b8c2" points="464.0,337.0 468.0,350.0 480.0,355.5 506.0,358.0 513.0,346.0 516.0,332.0 519.0,323.0 524.0,330.0 528.0,334.0 533.7,336.0 542.0,345.0 550.0,353.7 559.6,357.4 580.0,358.5 609.6,358.3 618.0,355.0 624.4,350.0 631.0,340.0 637.4,327.8 644.8,320.4 650.0,322.0 652.2,326.0 656.0,337.0 760.0,337.0 760.0,600.0 464.0,600.0"/><polygon fill="#a2b8c2" points="1030.0,374.0 1090.0,385.0 1144.0,400.0 1211.0,420.4 1266.7,430.5 1303.7,420.4 1322.0,413.0 1333.0,407.4 1339.0,400.0 1342.0,394.0 1350.0,394.0 1353.7,400.0 1359.0,409.0 1370.0,414.0 1383.0,407.4 1387.0,403.7 1392.6,413.0 1403.7,419.4 1418.5,416.7 1426.0,413.0 1426.0,600.0 1030.0,600.0"/><polygon fill="#f3f4f4" points="491.0,151.0 484.0,165.0 480.0,176.0 464.0,172.0 464.0,213.0 497.0,214.0 501.0,195.0 507.0,180.0 517.0,175.0 530.0,178.0 540.0,192.0 547.0,212.0 553.0,229.0 565.0,215.0 580.0,207.0 587.0,212.0 602.0,196.0 605.0,229.0 615.0,215.0 637.0,211.0 643.0,200.0 645.0,173.0 654.0,151.0"/><polygon fill="#a2b8c2" points="464.0,151.0 491.0,151.0 484.0,165.0 480.0,176.0 464.0,172.0"/><polygon fill="#a2b8c2" points="549.0,151.0 551.0,170.0 556.0,181.0 564.0,178.5 574.0,183.5 581.0,201.0 586.5,211.0 596.0,205.0 602.8,196.0 605.0,151.0"/><polygon fill="#f3f4f4" points="711.0,151.0 713.0,166.0 719.0,178.0 727.0,182.0 736.0,180.0 738.0,165.0 738.0,151.0"/><polygon fill="#f3f4f4" points="884.0,151.0 890.0,155.0 900.0,155.0 904.0,151.0"/><polygon fill="#f3f4f4" points="946.0,151.0 952.0,170.0 956.0,200.0 958.0,250.0 958.0,268.0 968.0,268.0 975.0,255.0 979.0,233.0 986.0,213.0 994.0,201.0 1016.0,190.0 1030.0,188.0 1044.0,201.0 1051.0,211.0 1061.0,210.0 1079.0,216.0 1099.0,246.0 1106.0,276.0 1106.0,286.0 1149.0,282.0 1170.0,293.0 1181.0,301.0 1206.0,331.0 1234.0,341.0 1269.0,337.0 1294.0,326.0 1299.0,298.0 1314.0,295.0 1334.0,306.0 1354.0,333.0 1374.0,343.0 1394.0,348.0 1401.0,368.0 1426.0,375.0 1426.0,151.0"/><polygon fill="#a2b8c2" points="1074.0,151.0 1078.0,166.0 1084.0,178.0 1104.0,181.0 1116.0,188.0 1124.0,205.0 1129.0,212.0 1136.0,200.0 1144.0,188.0 1156.0,177.0 1176.0,177.0 1184.0,198.0 1194.0,210.0 1209.0,212.0 1224.0,231.0 1239.0,231.0 1246.0,243.0 1256.0,251.0 1261.0,273.0 1265.0,262.0 1269.0,251.0 1281.0,223.0 1294.0,206.0 1309.0,208.0 1319.0,222.0 1334.0,220.0 1359.0,221.0 1362.0,245.0 1366.0,266.0 1384.0,268.0 1396.0,281.0 1399.0,310.0 1401.0,336.0 1414.0,333.0 1426.0,348.0 1426.0,151.0"/><polygon fill="#a2b8c2" points="993.0,151.0 990.0,172.0 992.0,179.0 999.0,181.0 1005.0,172.0 1012.0,160.0 1016.0,151.0"/><polygon fill="#4e2d1f" points="464.0,522.0 485.6,500.0 506.0,474.0 554.0,444.4 598.5,418.5 639.0,389.0 658.0,368.5 680.0,339.0 713.0,300.0 734.0,280.0 759.0,257.0 775.0,251.7 796.0,241.0 807.0,238.8 816.0,235.0 829.0,235.0 838.5,242.8 854.4,251.7 870.0,273.0 890.0,303.0 895.0,307.0 913.7,293.0 937.5,279.4 947.0,273.0 962.0,273.0 967.8,277.6 986.3,287.8 997.4,302.6 1010.4,321.1 1023.3,339.6 1038.1,360.0 1047.4,378.5 1056.7,398.9 1071.5,426.7 1084.4,452.6 1094.0,468.0 1119.0,508.0 1126.5,523.0 1124.0,543.0 1114.0,558.0 1114.0,600.0 464.0,600.0"/><polygon fill="#8a5a3e" points="820.7,238.0 824.0,237.5 837.0,244.5 853.0,253.5 868.5,275.0 888.5,304.5 895.6,307.5 908.5,323.0 927.0,352.6 945.6,374.8 964.0,389.6 982.6,406.3 1001.0,423.0 1014.0,436.0 1004.8,417.4 990.0,389.6 973.3,363.7 964.0,330.4 958.5,297.0 953.0,276.0 962.0,275.0 966.5,279.5 985.0,290.0 996.0,304.5 1008.5,322.5 1021.5,341.0 1036.0,361.5 1045.5,380.0 1054.7,400.0 1069.5,428.0 1082.4,454.0 1092.0,469.5 1117.0,509.0 1123.5,523.0 1121.5,542.0 1112.0,556.0 707.0,560.0 707.8,510.3 713.0,494.7 739.0,484.3 765.1,477.8 783.3,455.6 786.0,455.0 757.0,422.8 734.0,389.4 734.0,385.8 757.4,358.5 779.0,330.8 793.0,303.0 810.8,259.6"/><polygon fill="#4e2d1f" points="840.5,311.0 846.4,326.9 848.4,362.5 866.2,392.2 874.2,415.0 898.0,456.0 888.0,455.0 864.0,420.0 850.0,392.0 834.6,368.4 831.6,322.9"/><polygon fill="#4e2d1f" points="1029.0,404.4 1036.0,408.0 1047.4,434.0 1056.7,460.0 1060.0,476.0 1054.0,476.0 1049.0,460.0 1038.0,426.7 1030.7,406.3"/><polygon fill="#1d190b" points="504.0,600.0 504.2,502.2 514.4,497.4 521.7,490.2 528.9,483.0 533.1,478.1 536.1,492.6 542.1,480.5 553.0,456.5 555.4,487.8 567.4,489.0 570.4,484.2 574.0,507.0 583.0,484.2 587.8,516.6 592.7,489.0 598.7,502.2 604.1,438.4 615.5,478.1 628.8,511.8 635.4,479.3 643.2,508.2 646.2,490.2 655.2,489.0 663.0,480.5 666.1,450.5 670.9,466.1 681.7,514.2 684.1,478.1 692.5,492.6 699.8,514.2 707.8,510.3 713.0,512.0 723.4,518.0 731.2,494.7 744.3,529.8 754.7,526.0 778.1,501.2 784.6,502.5 796.4,484.3 802.9,526.0 806.8,529.8 830.0,529.0 842.0,526.0 849.7,541.6 855.0,506.4 862.0,520.0 869.3,533.8 873.2,501.2 884.9,523.3 888.8,479.0 900.5,497.3 904.4,462.1 924.0,492.0 938.3,529.8 940.0,524.2 947.3,506.5 950.4,506.5 958.2,534.6 961.9,529.4 966.0,530.4 973.3,540.8 977.5,534.6 984.8,526.3 991.0,524.2 998.3,540.8 1002.5,528.3 1010.8,529.4 1017.0,540.8 1025.4,537.7 1031.7,532.5 1044.2,520.0 1054.6,500.2 1058.8,513.8 1061.9,534.6 1069.2,541.9 1080.6,546.0 1085.8,551.2 1096.2,554.4 1106.7,557.5 1111.9,555.4 1123.3,528.3 1133.3,494.4 1138.0,537.0 1145.4,523.1 1152.8,532.4 1161.0,527.8 1169.4,512.0 1175.0,526.0 1179.6,477.8 1188.9,503.7 1195.4,477.8 1209.3,514.8 1218.5,507.4 1232.4,488.9 1242.6,511.0 1246.3,501.0 1266.7,501.0 1270.4,512.0 1274.0,506.5 1282.4,507.4 1290.7,488.9 1296.3,514.8 1303.7,503.7 1309.3,524.0 1313.0,518.5 1322.2,503.7 1331.5,518.5 1338.9,503.7 1346.3,516.7 1351.9,512.0 1359.3,511.0 1363.0,518.5 1372.2,512.0 1381.5,533.3 1394.4,533.3 1401.9,522.2 1414.8,505.5 1418.5,518.5 1425.9,488.9 1426.0,498.0 1426.0,600.0"/><rect x="504" y="569" width="922" height="18" fill="#230b05"/><rect x="504" y="569" width="23" height="31" fill="#230b05"/><rect x="464" y="581" width="40" height="14" fill="#a7bcc6"/><rect x="464" y="595" width="40" height="4" fill="#3d3a38"/><rect x="464" y="599" width="63" height="57" fill="#4d2d12"/><polygon fill="#1f9c4c" points="527.0,586.0 700.0,586.0 760.0,584.0 840.0,584.5 1000.0,582.5 1060.0,584.0 1130.0,582.0 1180.0,584.0 1240.0,583.0 1290.0,584.0 1345.0,582.0 1400.0,584.0 1426.0,584.0 1426.0,606.0 527.0,606.0"/><rect x="527" y="606" width="899" height="4" fill="#1d9649"/><rect x="527" y="610" width="899" height="6" fill="#1a8544"/><rect x="527" y="616" width="899" height="40" fill="#5e3517"/><rect x="527" y="616" width="899" height="6" fill="#522c12"/><rect x="527" y="630" width="899" height="12" fill="#6f3f1c"/><rect x="527" y="648" width="899" height="8" fill="#563015"/><g transform="translate(634.0 250.9) rotate(21.8)"><rect x="-74.5" y="-7.5" width="149.0" height="15.0" rx="2.5" fill="#8a4712"/><rect x="-73.5" y="-6.5" width="147.0" height="6.0" rx="2" fill="#c0722a"/><rect x="-73.5" y="0.8" width="147.0" height="5.7" rx="2" fill="#b86a24"/><rect x="-71.5" y="-6.0" width="141.0" height="1.2" fill="#dc9440" opacity="0.7"/><rect x="-71.5" y="1.8" width="141.0" height="1.2" fill="#dc9440" opacity="0.6"/><circle cx="-70.5" cy="-3.8" r="1.2" fill="#d8d8d8"/><circle cx="-70.5" cy="3.8" r="1.2" fill="#d8d8d8"/><circle cx="70.5" cy="-3.8" r="1.2" fill="#d8d8d8"/><circle cx="70.5" cy="3.8" r="1.2" fill="#d8d8d8"/></g><g transform="translate(743.4 315.4) rotate(0.0)"><rect x="-35.5" y="-7.0" width="71.0" height="14.0" rx="2.5" fill="#8a4712"/><rect x="-34.5" y="-6.0" width="69.0" height="5.5" rx="2" fill="#c0722a"/><rect x="-34.5" y="0.8" width="69.0" height="5.2" rx="2" fill="#b86a24"/><rect x="-32.5" y="-5.5" width="63.0" height="1.2" fill="#dc9440" opacity="0.7"/><rect x="-32.5" y="1.8" width="63.0" height="1.2" fill="#dc9440" opacity="0.6"/><circle cx="-31.5" cy="-3.5" r="1.2" fill="#d8d8d8"/><circle cx="-31.5" cy="3.5" r="1.2" fill="#d8d8d8"/><circle cx="31.5" cy="-3.5" r="1.2" fill="#d8d8d8"/><circle cx="31.5" cy="3.5" r="1.2" fill="#d8d8d8"/></g><g transform="translate(854.6 354.1) rotate(6.6)"><rect x="-27.5" y="-7.0" width="55.0" height="14.0" rx="2.5" fill="#8a4712"/><rect x="-26.5" y="-6.0" width="53.0" height="5.5" rx="2" fill="#c0722a"/><rect x="-26.5" y="0.8" width="53.0" height="5.2" rx="2" fill="#b86a24"/><rect x="-24.5" y="-5.5" width="47.0" height="1.2" fill="#dc9440" opacity="0.7"/><rect x="-24.5" y="1.8" width="47.0" height="1.2" fill="#dc9440" opacity="0.6"/><circle cx="-23.5" cy="-3.5" r="1.2" fill="#d8d8d8"/><circle cx="-23.5" cy="3.5" r="1.2" fill="#d8d8d8"/><circle cx="23.5" cy="-3.5" r="1.2" fill="#d8d8d8"/><circle cx="23.5" cy="3.5" r="1.2" fill="#d8d8d8"/></g><g transform="translate(902.8 399.1) rotate(0.0)"><rect x="-31.5" y="-7.0" width="63.0" height="14.0" rx="2.5" fill="#8a4712"/><rect x="-30.5" y="-6.0" width="61.0" height="5.5" rx="2" fill="#c0722a"/><rect x="-30.5" y="0.8" width="61.0" height="5.2" rx="2" fill="#b86a24"/><rect x="-28.5" y="-5.5" width="55.0" height="1.2" fill="#dc9440" opacity="0.7"/><rect x="-28.5" y="1.8" width="55.0" height="1.2" fill="#dc9440" opacity="0.6"/><circle cx="-27.5" cy="-3.5" r="1.2" fill="#d8d8d8"/><circle cx="-27.5" cy="3.5" r="1.2" fill="#d8d8d8"/><circle cx="27.5" cy="-3.5" r="1.2" fill="#d8d8d8"/><circle cx="27.5" cy="3.5" r="1.2" fill="#d8d8d8"/></g><g transform="translate(666.5 419.9) rotate(0.0)"><rect x="-57.5" y="-7.0" width="115.0" height="14.0" rx="2.5" fill="#8a4712"/><rect x="-56.5" y="-6.0" width="113.0" height="5.5" rx="2" fill="#c0722a"/><rect x="-56.5" y="0.8" width="113.0" height="5.2" rx="2" fill="#b86a24"/><rect x="-54.5" y="-5.5" width="107.0" height="1.2" fill="#dc9440" opacity="0.7"/><rect x="-54.5" y="1.8" width="107.0" height="1.2" fill="#dc9440" opacity="0.6"/><circle cx="-53.5" cy="-3.5" r="1.2" fill="#d8d8d8"/><circle cx="-53.5" cy="3.5" r="1.2" fill="#d8d8d8"/><circle cx="53.5" cy="-3.5" r="1.2" fill="#d8d8d8"/><circle cx="53.5" cy="3.5" r="1.2" fill="#d8d8d8"/></g><g transform="translate(694.0 523.9) rotate(0.0)"><rect x="-31.2" y="-7.0" width="62.5" height="14.0" rx="2.5" fill="#8a4712"/><rect x="-30.2" y="-6.0" width="60.5" height="5.5" rx="2" fill="#c0722a"/><rect x="-30.2" y="0.8" width="60.5" height="5.2" rx="2" fill="#b86a24"/><rect x="-28.2" y="-5.5" width="54.5" height="1.2" fill="#dc9440" opacity="0.7"/><rect x="-28.2" y="1.8" width="54.5" height="1.2" fill="#dc9440" opacity="0.6"/><circle cx="-27.2" cy="-3.5" r="1.2" fill="#d8d8d8"/><circle cx="-27.2" cy="3.5" r="1.2" fill="#d8d8d8"/><circle cx="27.2" cy="-3.5" r="1.2" fill="#d8d8d8"/><circle cx="27.2" cy="3.5" r="1.2" fill="#d8d8d8"/></g><g transform="translate(839.6 518.6) rotate(0.0)"><rect x="-30.5" y="-7.0" width="61.0" height="14.0" rx="2.5" fill="#8a4712"/><rect x="-29.5" y="-6.0" width="59.0" height="5.5" rx="2" fill="#c0722a"/><rect x="-29.5" y="0.8" width="59.0" height="5.2" rx="2" fill="#b86a24"/><rect x="-27.5" y="-5.5" width="53.0" height="1.2" fill="#dc9440" opacity="0.7"/><rect x="-27.5" y="1.8" width="53.0" height="1.2" fill="#dc9440" opacity="0.6"/><circle cx="-26.5" cy="-3.5" r="1.2" fill="#d8d8d8"/><circle cx="-26.5" cy="3.5" r="1.2" fill="#d8d8d8"/><circle cx="26.5" cy="-3.5" r="1.2" fill="#d8d8d8"/><circle cx="26.5" cy="3.5" r="1.2" fill="#d8d8d8"/></g><g transform="translate(972.1 251.2) rotate(-12.8)"><rect x="-31.0" y="-7.0" width="62.0" height="14.0" rx="2.5" fill="#8a4712"/><rect x="-30.0" y="-6.0" width="60.0" height="5.5" rx="2" fill="#c0722a"/><rect x="-30.0" y="0.8" width="60.0" height="5.2" rx="2" fill="#b86a24"/><rect x="-28.0" y="-5.5" width="54.0" height="1.2" fill="#dc9440" opacity="0.7"/><rect x="-28.0" y="1.8" width="54.0" height="1.2" fill="#dc9440" opacity="0.6"/><circle cx="-27.0" cy="-3.5" r="1.2" fill="#d8d8d8"/><circle cx="-27.0" cy="3.5" r="1.2" fill="#d8d8d8"/><circle cx="27.0" cy="-3.5" r="1.2" fill="#d8d8d8"/><circle cx="27.0" cy="3.5" r="1.2" fill="#d8d8d8"/></g><g transform="translate(1068.8 242.8) rotate(100.2)"><rect x="-31.0" y="-7.0" width="62.0" height="14.0" rx="2.5" fill="#8a4712"/><rect x="-30.0" y="-6.0" width="60.0" height="5.5" rx="2" fill="#c0722a"/><rect x="-30.0" y="0.8" width="60.0" height="5.2" rx="2" fill="#b86a24"/><rect x="-28.0" y="-5.5" width="54.0" height="1.2" fill="#dc9440" opacity="0.7"/><rect x="-28.0" y="1.8" width="54.0" height="1.2" fill="#dc9440" opacity="0.6"/><circle cx="-27.0" cy="-3.5" r="1.2" fill="#d8d8d8"/><circle cx="-27.0" cy="3.5" r="1.2" fill="#d8d8d8"/><circle cx="27.0" cy="-3.5" r="1.2" fill="#d8d8d8"/><circle cx="27.0" cy="3.5" r="1.2" fill="#d8d8d8"/></g><g transform="translate(1112.6 294.3) rotate(-31.5)"><rect x="-30.0" y="-7.0" width="60.0" height="14.0" rx="2.5" fill="#8a4712"/><rect x="-29.0" y="-6.0" width="58.0" height="5.5" rx="2" fill="#c0722a"/><rect x="-29.0" y="0.8" width="58.0" height="5.2" rx="2" fill="#b86a24"/><rect x="-27.0" y="-5.5" width="52.0" height="1.2" fill="#dc9440" opacity="0.7"/><rect x="-27.0" y="1.8" width="52.0" height="1.2" fill="#dc9440" opacity="0.6"/><circle cx="-26.0" cy="-3.5" r="1.2" fill="#d8d8d8"/><circle cx="-26.0" cy="3.5" r="1.2" fill="#d8d8d8"/><circle cx="26.0" cy="-3.5" r="1.2" fill="#d8d8d8"/><circle cx="26.0" cy="3.5" r="1.2" fill="#d8d8d8"/></g><g transform="translate(1187.0 226.0) rotate(4.9)"><rect x="-30.0" y="-8.5" width="60.0" height="17.0" rx="2.5" fill="#8a4712"/><rect x="-29.0" y="-7.5" width="58.0" height="7.0" rx="2" fill="#c0722a"/><rect x="-29.0" y="0.8" width="58.0" height="6.7" rx="2" fill="#b86a24"/><rect x="-27.0" y="-7.0" width="52.0" height="1.2" fill="#dc9440" opacity="0.7"/><rect x="-27.0" y="1.8" width="52.0" height="1.2" fill="#dc9440" opacity="0.6"/><circle cx="-26.0" cy="-4.2" r="1.2" fill="#d8d8d8"/><circle cx="-26.0" cy="4.2" r="1.2" fill="#d8d8d8"/><circle cx="26.0" cy="-4.2" r="1.2" fill="#d8d8d8"/><circle cx="26.0" cy="4.2" r="1.2" fill="#d8d8d8"/></g><g transform="translate(1262.1 332.3) rotate(0.0)"><rect x="-47.0" y="-7.5" width="94.0" height="15.0" rx="2.5" fill="#8a4712"/><rect x="-46.0" y="-6.5" width="92.0" height="6.0" rx="2" fill="#c0722a"/><rect x="-46.0" y="0.8" width="92.0" height="5.7" rx="2" fill="#b86a24"/><rect x="-44.0" y="-6.0" width="86.0" height="1.2" fill="#dc9440" opacity="0.7"/><rect x="-44.0" y="1.8" width="86.0" height="1.2" fill="#dc9440" opacity="0.6"/><circle cx="-43.0" cy="-3.8" r="1.2" fill="#d8d8d8"/><circle cx="-43.0" cy="3.8" r="1.2" fill="#d8d8d8"/><circle cx="43.0" cy="-3.8" r="1.2" fill="#d8d8d8"/><circle cx="43.0" cy="3.8" r="1.2" fill="#d8d8d8"/></g><g transform="translate(1014.5 385.0) rotate(38.2)"><rect x="-70.0" y="-7.0" width="140.0" height="14.0" rx="2.5" fill="#8a4712"/><rect x="-69.0" y="-6.0" width="138.0" height="5.5" rx="2" fill="#c0722a"/><rect x="-69.0" y="0.8" width="138.0" height="5.2" rx="2" fill="#b86a24"/><rect x="-67.0" y="-5.5" width="132.0" height="1.2" fill="#dc9440" opacity="0.7"/><rect x="-67.0" y="1.8" width="132.0" height="1.2" fill="#dc9440" opacity="0.6"/><circle cx="-66.0" cy="-3.5" r="1.2" fill="#d8d8d8"/><circle cx="-66.0" cy="3.5" r="1.2" fill="#d8d8d8"/><circle cx="66.0" cy="-3.5" r="1.2" fill="#d8d8d8"/><circle cx="66.0" cy="3.5" r="1.2" fill="#d8d8d8"/></g><g transform="translate(1153.6 442.1) rotate(0.0)"><rect x="-53.5" y="-7.0" width="107.0" height="14.0" rx="2.5" fill="#8a4712"/><rect x="-52.5" y="-6.0" width="105.0" height="5.5" rx="2" fill="#c0722a"/><rect x="-52.5" y="0.8" width="105.0" height="5.2" rx="2" fill="#b86a24"/><rect x="-50.5" y="-5.5" width="99.0" height="1.2" fill="#dc9440" opacity="0.7"/><rect x="-50.5" y="1.8" width="99.0" height="1.2" fill="#dc9440" opacity="0.6"/><circle cx="-49.5" cy="-3.5" r="1.2" fill="#d8d8d8"/><circle cx="-49.5" cy="3.5" r="1.2" fill="#d8d8d8"/><circle cx="49.5" cy="-3.5" r="1.2" fill="#d8d8d8"/><circle cx="49.5" cy="3.5" r="1.2" fill="#d8d8d8"/></g><g transform="translate(1003.6 511.1) rotate(0.0)"><rect x="-31.0" y="-7.0" width="62.0" height="14.0" rx="2.5" fill="#8a4712"/><rect x="-30.0" y="-6.0" width="60.0" height="5.5" rx="2" fill="#c0722a"/><rect x="-30.0" y="0.8" width="60.0" height="5.2" rx="2" fill="#b86a24"/><rect x="-28.0" y="-5.5" width="54.0" height="1.2" fill="#dc9440" opacity="0.7"/><rect x="-28.0" y="1.8" width="54.0" height="1.2" fill="#dc9440" opacity="0.6"/><circle cx="-27.0" cy="-3.5" r="1.2" fill="#d8d8d8"/><circle cx="-27.0" cy="3.5" r="1.2" fill="#d8d8d8"/><circle cx="27.0" cy="-3.5" r="1.2" fill="#d8d8d8"/><circle cx="27.0" cy="3.5" r="1.2" fill="#d8d8d8"/></g><g transform="translate(1135.0 545.1) rotate(0.0)"><rect x="-31.0" y="-7.0" width="62.0" height="14.0" rx="2.5" fill="#8a4712"/><rect x="-30.0" y="-6.0" width="60.0" height="5.5" rx="2" fill="#c0722a"/><rect x="-30.0" y="0.8" width="60.0" height="5.2" rx="2" fill="#b86a24"/><rect x="-28.0" y="-5.5" width="54.0" height="1.2" fill="#dc9440" opacity="0.7"/><rect x="-28.0" y="1.8" width="54.0" height="1.2" fill="#dc9440" opacity="0.6"/><circle cx="-27.0" cy="-3.5" r="1.2" fill="#d8d8d8"/><circle cx="-27.0" cy="3.5" r="1.2" fill="#d8d8d8"/><circle cx="27.0" cy="-3.5" r="1.2" fill="#d8d8d8"/><circle cx="27.0" cy="3.5" r="1.2" fill="#d8d8d8"/></g><g transform="translate(1354.0 497.1) rotate(0.0)"><rect x="-61.2" y="-7.0" width="122.5" height="14.0" rx="2.5" fill="#8a4712"/><rect x="-60.2" y="-6.0" width="120.5" height="5.5" rx="2" fill="#c0722a"/><rect x="-60.2" y="0.8" width="120.5" height="5.2" rx="2" fill="#b86a24"/><rect x="-58.2" y="-5.5" width="114.5" height="1.2" fill="#dc9440" opacity="0.7"/><rect x="-58.2" y="1.8" width="114.5" height="1.2" fill="#dc9440" opacity="0.6"/><circle cx="-57.2" cy="-3.5" r="1.2" fill="#d8d8d8"/><circle cx="-57.2" cy="3.5" r="1.2" fill="#d8d8d8"/><circle cx="57.2" cy="-3.5" r="1.2" fill="#d8d8d8"/><circle cx="57.2" cy="3.5" r="1.2" fill="#d8d8d8"/></g><path d="M622.60 199.30L612.64 187.43A15.5 15.5 0 0 1 632.56 187.43Z" fill="#3d8fe8"/><path d="M622.60 199.30L632.56 187.43A15.5 15.5 0 0 1 637.57 203.31Z" fill="#ececec"/><path d="M622.60 199.30L637.57 203.31A15.5 15.5 0 0 1 622.60 214.80Z" fill="#dc3222"/><path d="M622.60 199.30L622.60 214.80A15.5 15.5 0 0 1 608.55 205.85Z" fill="#229a3c"/><path d="M622.60 199.30L608.55 205.85A15.5 15.5 0 0 1 612.64 187.43Z" fill="#f4e21c"/><circle cx="622.6" cy="199.3" r="15.5" fill="none" stroke="#555" stroke-opacity="0.5" stroke-width="0.8"/><circle cx="622.6" cy="199.3" r="4" fill="#f4f4f4"/><path d="M470.5 151V656M488.5 151V656M507.5 151V656M525.5 151V656M544.5 151V656M562.5 151V656M581.5 151V656M599.5 151V656M618.5 151V656M636.5 151V656M655.5 151V656M673.5 151V656M692.5 151V656M710.5 151V656M729.5 151V656M747.5 151V656M766.5 151V656M784.5 151V656M803.5 151V656M821.5 151V656M840.5 151V656M858.5 151V656M876.5 151V656M895.5 151V656M913.5 151V656M932.5 151V656M950.5 151V656M969.5 151V656M987.5 151V656M1006.5 151V656M1024.5 151V656M1043.5 151V656M1061.5 151V656M1080.5 151V656M1098.5 151V656M1117.5 151V656M1135.5 151V656M1154.5 151V656M1172.5 151V656M1191.5 151V656M1209.5 151V656M1228.5 151V656M1246.5 151V656M1265.5 151V656M1283.5 151V656M1302.5 151V656M1320.5 151V656M1339.5 151V656M1357.5 151V656M1376.5 151V656M1394.5 151V656M1413.5 151V656M464 161.5H1426M464 179.5H1426M464 198.5H1426M464 216.5H1426M464 235.5H1426M464 253.5H1426M464 272.5H1426M464 290.5H1426M464 309.5H1426M464 327.5H1426M464 346.5H1426M464 364.5H1426M464 383.5H1426M464 401.5H1426M464 420.5H1426M464 438.5H1426M464 457.5H1426M464 475.5H1426M464 494.5H1426M464 512.5H1426M464 531.5H1426M464 549.5H1426M464 568.5H1426M464 586.5H1426M464 605.5H1426M464 623.5H1426M464 642.5H1426" stroke="#808080" stroke-opacity="0.08" stroke-width="1"/><path d="M470.5 151V656M655.5 151V656M840.5 151V656M1024.5 151V656M1209.5 151V656M1394.5 151V656M464 235.5H1426M464 420.5H1426M464 605.5H1426" stroke="#808080" stroke-opacity="0.8" stroke-width="1"/><path d="M554.5 656V156.5H1426" fill="none" stroke="#dcdcdc" stroke-opacity="0.9" stroke-width="1"/><path d="M1017 424c0-3 2-4 4-3.5c0-3 3-4 5-3c1.5-2 4-1.5 5 1c2 0 3 2 2 4l-1 4h-13z" fill="#fff"/></svg>
</body></html>
